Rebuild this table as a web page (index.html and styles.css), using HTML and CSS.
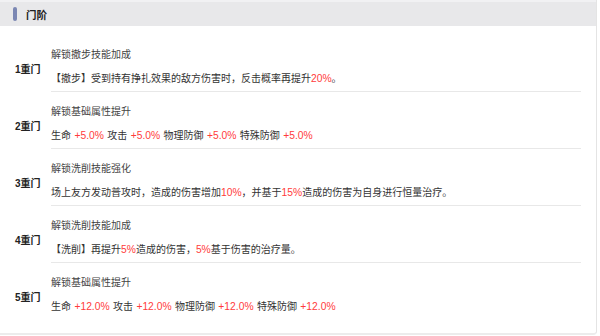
FILE: index.html
```html
<!DOCTYPE html>
<html lang="zh-CN">
<head>
<meta charset="utf-8">
<title>门阶</title>
<link rel="stylesheet" href="styles.css">
</head>
<body>
<div class="card">
  <div class="header">
    <span class="bar"></span>
    <span class="title">门阶</span>
  </div>
  <div class="list">
    <div class="row">
      <div class="label">1重门</div>
      <div class="content">
        <div class="name">解锁撤步技能加成</div>
        <div class="desc">【撤步】受到持有挣扎效果的敌方伤害时，反击概率再提升<span class="red">20%</span>。</div>
      </div>
    </div>
    <div class="row">
      <div class="label">2重门</div>
      <div class="content">
        <div class="name">解锁基础属性提升</div>
        <div class="desc">生命 <span class="red">+5.0%</span> 攻击 <span class="red">+5.0%</span> 物理防御 <span class="red">+5.0%</span> 特殊防御 <span class="red">+5.0%</span></div>
      </div>
    </div>
    <div class="row">
      <div class="label">3重门</div>
      <div class="content">
        <div class="name">解锁洗削技能强化</div>
        <div class="desc">场上友方发动普攻时，造成的伤害增加<span class="red">10%</span>，并基于<span class="red">15%</span>造成的伤害为自身进行恒量治疗。</div>
      </div>
    </div>
    <div class="row">
      <div class="label">4重门</div>
      <div class="content">
        <div class="name">解锁洗削技能加成</div>
        <div class="desc">【洗削】再提升<span class="red">5%</span>造成的伤害，<span class="red">5%</span>基于伤害的治疗量。</div>
      </div>
    </div>
    <div class="row last">
      <div class="label">5重门</div>
      <div class="content">
        <div class="name">解锁基础属性提升</div>
        <div class="desc">生命 <span class="red">+12.0%</span> 攻击 <span class="red">+12.0%</span> 物理防御 <span class="red">+12.0%</span> 特殊防御 <span class="red">+12.0%</span></div>
      </div>
    </div>
  </div>
</div>
</body>
</html>
```
FILE: styles.css
```css
html, body {
  margin: 0;
  padding: 0;
  background: #ffffff;
}
body {
  font-family: "Liberation Sans", "Noto Sans CJK SC", sans-serif;
  font-size: 10px;
  color: #333333;
}
.card {
  width: 597px;
  box-sizing: border-box;
  border-right: 1px solid #e4e4e4;
  border-bottom: 2px solid #ececec;
  border-bottom-right-radius: 4px;
  background: #ffffff;
}
.header {
  height: 24px;
  border-top: 2px solid #f1f1f3;
  background: #e8e8ea;
  display: flex;
  align-items: center;
  padding-left: 13px;
  gap: 9px;
}
.bar {
  width: 4px;
  height: 14px;
  border-radius: 2px;
  background: #7b87b3;
}
.title {
  font-family: "Noto Sans CJK SC", sans-serif;
  font-weight: bold;
  font-size: 10.5px;
  color: #222222;
}
.list {
  padding: 9px 0 13px 0;
}
.row {
  display: flex;
  align-items: center;
  padding-top: 9px;
}
.label {
  width: 36px;
  padding-left: 15px;
  font-weight: bold;
  color: #222222;
}
.content {
  flex: 1;
  margin-right: 15px;
  padding-bottom: 1px;
  border-bottom: 1px solid #e8e8e8;
  display: flex;
  flex-direction: column;
  gap: 2px;
}
.row.last .content {
  border-bottom-color: transparent;
}
.name {
  line-height: 22px;
  color: #444444;
}
.desc {
  line-height: 22px;
  color: #333333;
  word-spacing: 0.6px;
}
.red {
  color: #ff3b3b;
  font-size: 10.3px;
}
```
